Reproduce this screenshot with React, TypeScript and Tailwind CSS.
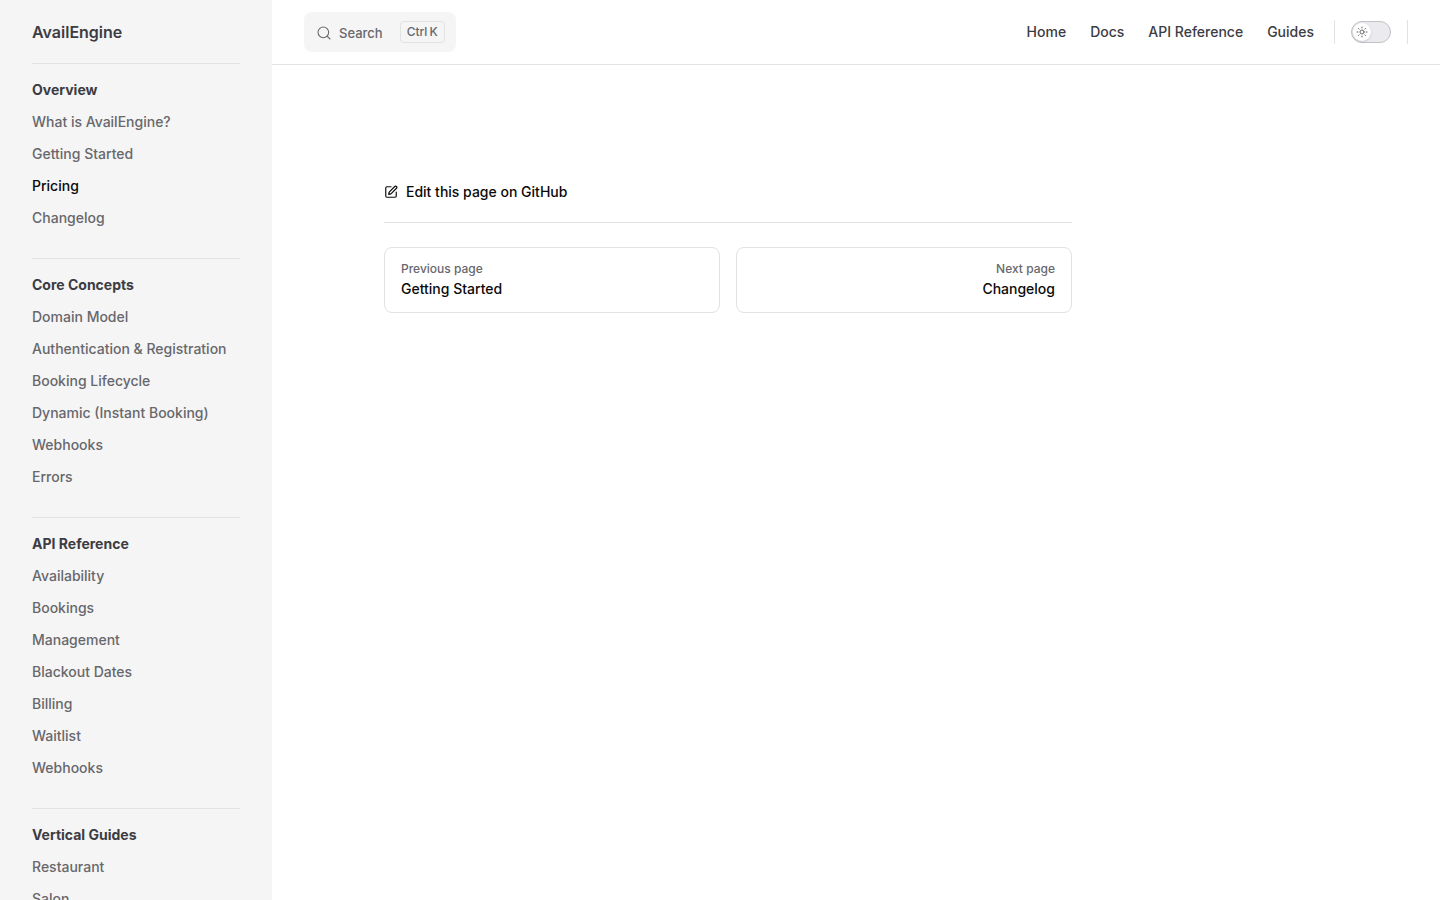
import React, { useState } from 'react';
import { Search, SquarePen, Sun } from 'lucide-react';

interface SidebarGroup {
  title: string;
  items: string[];
}

const navLinks = ['Home', 'Docs', 'API Reference', 'Guides'];

const sidebar: SidebarGroup[] = [
  {
    title: 'Overview',
    items: ['What is AvailEngine?', 'Getting Started', 'Pricing', 'Changelog'],
  },
  {
    title: 'Core Concepts',
    items: [
      'Domain Model',
      'Authentication & Registration',
      'Booking Lifecycle',
      'Dynamic (Instant Booking)',
      'Webhooks',
      'Errors',
    ],
  },
  {
    title: 'API Reference',
    items: ['Availability', 'Bookings', 'Management', 'Blackout Dates', 'Billing', 'Waitlist', 'Webhooks'],
  },
  {
    title: 'Vertical Guides',
    items: ['Restaurant', 'Salon'],
  },
];

const activePage = 'Pricing';

function Sidebar() {
  return (
    <aside className="sticky top-0 h-screen w-[272px] shrink-0 overflow-y-auto bg-[#f5f5f5] px-8 [scrollbar-width:none]">
      <a href="#" className="flex h-16 items-center border-b border-[#e2e2e3] text-base font-semibold">
        AvailEngine
      </a>
      <nav aria-label="Sidebar">
        {sidebar.map((group, i) => (
          <section key={group.title} className={i > 0 ? 'border-t border-[#e2e2e3] pt-2.5 pb-6' : 'pt-2.5 pb-6'}>
            <h2 className="py-1 text-sm leading-6 font-bold">{group.title}</h2>
            <ul>
              {group.items.map((item) => (
                <li key={item}>
                  <a
                    href="#"
                    aria-current={item === activePage ? 'page' : undefined}
                    className={`block py-1 text-sm leading-6 font-medium whitespace-nowrap ${
                      item === activePage ? 'text-[#0a0a0a]' : 'text-[#67676c]'
                    }`}
                  >
                    {item}
                  </a>
                </li>
              ))}
            </ul>
          </section>
        ))}
      </nav>
    </aside>
  );
}

function ThemeSwitch() {
  const [dark, setDark] = useState(false);

  return (
    <button
      type="button"
      role="switch"
      aria-checked={dark}
      aria-label="Switch to dark theme"
      onClick={() => setDark(!dark)}
      className="flex h-[22px] w-10 items-center rounded-full border border-[#c2c2c4] bg-[#ebebef] px-px"
    >
      <span
        className={`flex size-[18px] items-center justify-center rounded-full bg-white text-[#67676c] shadow-sm ${
          dark ? 'ml-auto' : ''
        }`}
      >
        <Sun size={12} />
      </span>
    </button>
  );
}

function Header() {
  return (
    <header className="flex h-[65px] items-center justify-between border-b border-[#e2e2e3] px-8">
      <button type="button" className="flex h-10 items-center rounded-lg bg-[#f5f5f5] pr-[11px] pl-3 text-[#67676c]">
        <span className="flex items-center gap-[7px] pt-0.5 pr-[17px] text-[13px] leading-5 font-medium">
          <Search size={16} strokeWidth={1.6} />
          Search
        </span>
        <span className="flex h-[22px] items-center gap-0.5 rounded border border-[#e2e2e3] px-1.5 text-xs font-medium">
          <kbd className="font-[Inter]">Ctrl</kbd>
          <kbd className="font-[Inter]">K</kbd>
        </span>
      </button>
      <div className="flex items-center">
        <nav aria-label="Main" className="flex">
          {navLinks.map((link) => (
            <a key={link} href="#" className="px-3 text-sm leading-6 font-medium">
              {link}
            </a>
          ))}
        </nav>
        <div className="mr-4 ml-2 h-6 w-px bg-[#e2e2e3]" />
        <ThemeSwitch />
        <div className="ml-4 h-6 w-px bg-[#e2e2e3]" />
      </div>
    </header>
  );
}

interface PagerLinkProps {
  label: string;
  title: string;
  alignRight?: boolean;
}

function PagerLink({ label, title, alignRight }: PagerLinkProps) {
  return (
    <a
      href="#"
      className={`block rounded-lg border border-[#e2e2e3] px-4 pt-[11px] pb-[13px] font-medium ${alignRight ? 'text-right' : ''}`}
    >
      <span className="block text-xs leading-5 text-[#67676c]">{label}</span>
      <span className="block text-sm leading-5 text-[#0a0a0a]">{title}</span>
    </a>
  );
}

export default function App() {
  return (
    <div className="flex min-h-screen bg-white font-[Inter,sans-serif] text-[#3c3c43] antialiased">
      <Sidebar />
      <div className="min-w-0 flex-1">
        <Header />
        {/* right padding keeps the outline column free */}
        <main className="pt-[111px] pr-[288px] pb-24 pl-8">
          <div className="mx-auto max-w-[688px]">
            <a href="#" className="flex w-fit items-center gap-2 text-sm leading-8 font-medium text-[#0a0a0a]">
              <SquarePen size={14} />
              Edit this page on GitHub
            </a>
            <nav aria-label="Pager" className="mt-3.5 grid grid-cols-2 gap-4 border-t border-[#e2e2e3] pt-6">
              <PagerLink label="Previous page" title="Getting Started" />
              <PagerLink label="Next page" title="Changelog" alignRight />
            </nav>
          </div>
        </main>
      </div>
    </div>
  );
}
